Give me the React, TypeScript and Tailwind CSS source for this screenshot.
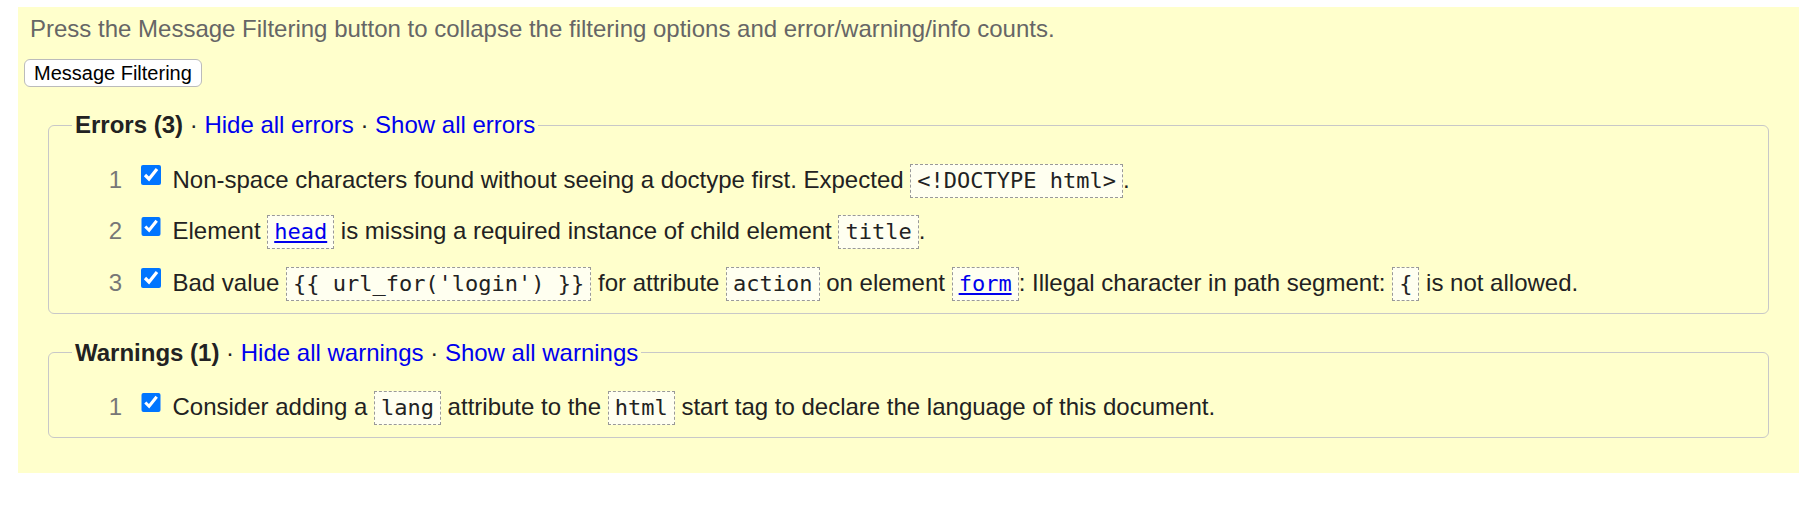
import React from "react";

const sans = { fontFamily: '"Liberation Sans", Arial, sans-serif' };

function Code({ children, link }: { children: React.ReactNode; link?: boolean }) {
  return (
    <code className="inline-block border border-dashed border-[#999] bg-[#fffff0] px-[6px] text-[22px] leading-[32px] font-['DejaVu_Sans_Mono',monospace] text-[#222]">
      {link ? <a className="text-[#0000ee] underline">{children}</a> : children}
    </code>
  );
}

function Row({ n, children }: { n: number; children: React.ReactNode }) {
  return (
    <div className="h-[34px] pl-[45px] whitespace-nowrap text-[24px] leading-[27px] text-[#222]">
      <span className="inline-block w-[28px] text-right text-[#777]">{n}</span>
      <input
        type="checkbox"
        defaultChecked
        className="ml-[19px] mr-[12px] h-[19.5px] w-[19.5px] align-[3px] accent-[#0075ff]"
      />
      {children}
    </div>
  );
}

function Group({
  title,
  hide,
  show,
  className,
  children,
}: {
  title: string;
  hide: string;
  show: string;
  className?: string;
  children: React.ReactNode;
}) {
  return (
    <fieldset className={"mx-[30px] rounded-[6px] border border-[#c8c8c8] px-0 pt-[24.5px] pb-[12px] " + (className ?? "")}>
      <legend className="ml-[23px] px-[3px] text-[24px] leading-[28px] text-[#222]">
        <b>{title}</b> · <a className="text-[#0000ee]">{hide}</a> · <a className="text-[#0000ee]">{show}</a>
      </legend>
      <div className="flex flex-col gap-[17.5px]">{children}</div>
    </fieldset>
  );
}

export default function App() {
  return (
    <div style={sans} className="bg-white">
      <div className="mt-[7px] ml-[18px] h-[466px] w-[1781px] bg-[#ffffcc] pt-[8px]">
        <p className="pl-[12px] text-[24px] leading-[27px] text-[#666]">
          Press the Message Filtering button to collapse the filtering options and error/warning/info counts.
        </p>
        <button className="mt-[17px] ml-[6px] h-[28px] rounded-[6px] border border-[#bbb] bg-white px-[9px] text-[20px] leading-[22px] text-black">
          Message Filtering
        </button>
        <Group className="mt-[24px]" title="Errors (3)" hide="Hide all errors" show="Show all errors">
          <Row n={1}>
            Non-space characters found without seeing a doctype first. Expected <Code>{"<!DOCTYPE html>"}</Code>.
          </Row>
          <Row n={2}>
            Element <Code link>head</Code> is missing a required instance of child element <Code>title</Code>.
          </Row>
          <Row n={3}>
            Bad value <Code>{"{{ url_for('login') }}"}</Code> for attribute <Code>action</Code> on element{" "}
            <Code link>form</Code>: Illegal character in path segment: <Code>{"{"}</Code> is not allowed.
          </Row>
        </Group>
        <Group className="mt-[25px]" title="Warnings (1)" hide="Hide all warnings" show="Show all warnings">
          <Row n={1}>
            Consider adding a <Code>lang</Code> attribute to the <Code>html</Code> start tag to declare the language of
            this document.
          </Row>
        </Group>
      </div>
    </div>
  );
}
